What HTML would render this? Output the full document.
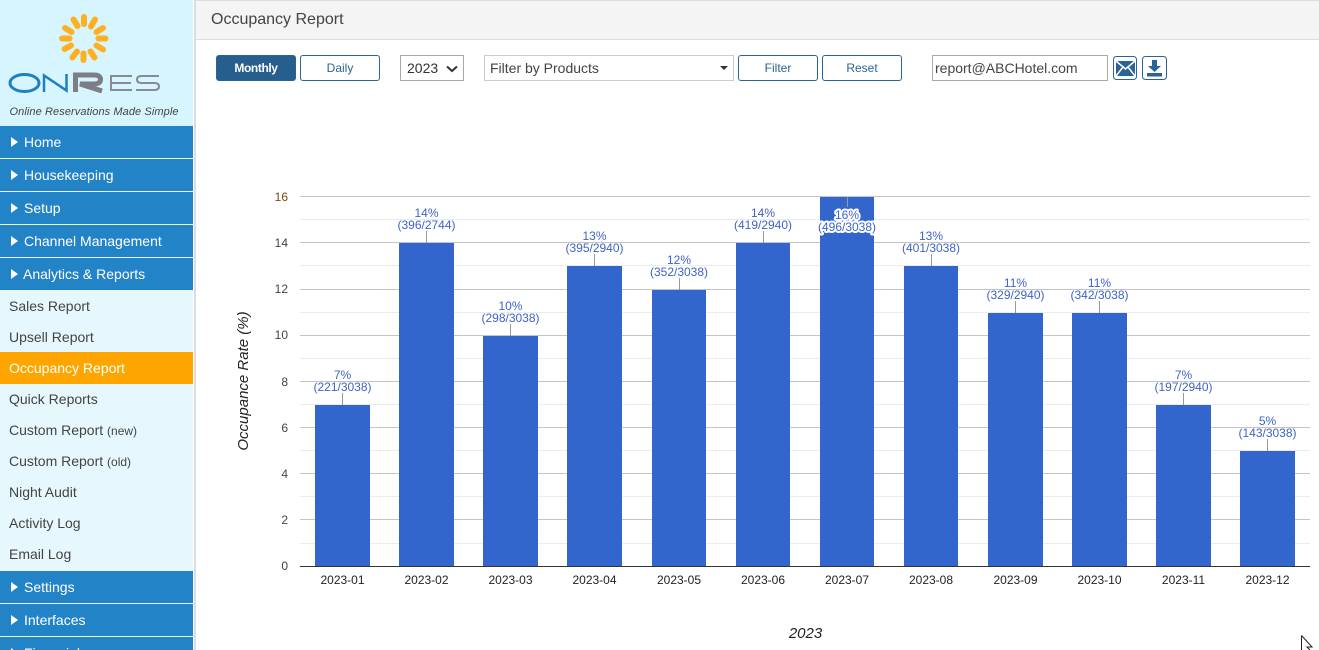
<!DOCTYPE html>
<html><head><meta charset="utf-8">
<style>
html,body{margin:0;padding:0;width:1319px;height:650px;overflow:hidden;background:#fff;font-family:"Liberation Sans",sans-serif;}
.abs{position:absolute;box-sizing:border-box;}
#side{left:0;top:0;width:193px;height:650px;background:#e6f7fd;overflow:hidden;}
#logo{left:0;top:0;width:193px;height:126px;background:#d7f5ff;}
.m{position:absolute;left:0;width:193px;height:32px;background:#2283c7;color:#fff;font-size:14px;line-height:32px;padding-left:24px;box-sizing:border-box;}
.m:before{content:"";position:absolute;left:11px;top:11px;border-left:7px solid #fff;border-top:5px solid transparent;border-bottom:5px solid transparent;}
.s{position:absolute;left:9px;font-size:14px;color:#444;line-height:20px;white-space:nowrap;}
.s small{font-size:12px;}
.btn{position:absolute;top:55px;height:26px;border:1px solid #2a6496;border-radius:3px;background:#fff;color:#2a6496;font-size:12px;text-align:center;line-height:24px;box-sizing:border-box;}
</style></head><body>
<div class="abs" id="side">
<div class="abs" id="logo">
<svg width="193" height="126" style="position:absolute;left:0;top:0">
<g stroke="#fdb022" stroke-width="6" stroke-linecap="round">
<line x1="84" y1="17" x2="84" y2="24"/>
<line x1="95" y1="19.500" x2="91" y2="26.500"/>
<line x1="103" y1="28" x2="96.500" y2="32"/>
<line x1="105.500" y1="38.500" x2="98.500" y2="38.500"/>
<line x1="103" y1="49.500" x2="96.500" y2="45.500"/>
<line x1="94.500" y1="57.500" x2="90.500" y2="51.500"/>
<line x1="83.500" y1="60" x2="83.500" y2="53.500"/>
<line x1="72.500" y1="57.500" x2="77" y2="51.500"/>
<line x1="64.500" y1="49" x2="71" y2="45.500"/>
<line x1="62" y1="38.500" x2="69.500" y2="38.500"/>
<line x1="65" y1="28" x2="71.500" y2="32"/>
<line x1="73.500" y1="19.500" x2="77.500" y2="26"/>
</g>
<ellipse cx="24.500" cy="83" rx="14.500" ry="8.500" fill="none" stroke="#1f7fc4" stroke-width="3"/>
<path d="M44 92V75.500L66.500 90.500V74" fill="none" stroke="#1f7fc4" stroke-width="2.500"/>
<path d="M75.500 92V75H94Q100.500 75 100.500 79.500Q100.500 84 94 84H80L102 91" fill="none" stroke="#7d7d85" stroke-width="5"/>
<path d="M132 76H111V90H132M111 83H131" fill="none" stroke="#8a8a92" stroke-width="2"/>
<path d="M159 76H142Q137 76 137 79.500Q137 83 142 83H154Q159 83 159 86.500Q159 90 154 90H136" fill="none" stroke="#8a8a92" stroke-width="2"/>
<text x="9.500" y="115" font-family="Liberation Sans" font-size="11" font-style="italic" fill="#444" textLength="169">Online Reservations Made Simple</text>
</svg>
</div>
<div class="m" style="top:126px">Home</div>
<div class="m" style="top:159px">Housekeeping</div>
<div class="m" style="top:192px">Setup</div>
<div class="m" style="top:225px">Channel Management</div>
<div class="m" style="top:258px;padding-left:23px">Analytics &amp; Reports</div>
<div class="s" style="top:296px">Sales Report</div>
<div class="s" style="top:327px">Upsell Report</div>
<div class="abs" style="left:0;top:352px;width:193px;height:32px;background:#ffa500"></div>
<div class="s" style="top:358px;color:#fff">Occupancy Report</div>
<div class="s" style="top:389px">Quick Reports</div>
<div class="s" style="top:420px">Custom Report <small>(new)</small></div>
<div class="s" style="top:451px">Custom Report <small>(old)</small></div>
<div class="s" style="top:482px">Night Audit</div>
<div class="s" style="top:513px">Activity Log</div>
<div class="s" style="top:544px">Email Log</div>
<div class="m" style="top:571px">Settings</div>
<div class="m" style="top:604px">Interfaces</div>
<div class="m" style="top:637px">Financials</div>
</div>
<div class="abs" style="left:193px;top:0;width:1px;height:650px;background:#fff"></div>
<div class="abs" style="left:194px;top:0;width:2px;height:650px;background:#ddd"></div>
<div class="abs" style="left:196px;top:0;width:1123px;height:40px;background:#f4f4f4;border-top:1px solid #ddd;border-bottom:1px solid #ddd;"></div>
<div class="abs" style="left:211px;top:9px;font-size:16px;line-height:20px;color:#444;top:10px">Occupancy Report</div>

<div class="btn" style="left:216px;width:80px;background:#265f8d;color:#fff;font-weight:bold;letter-spacing:-0.4px;">Monthly</div>
<div class="btn" style="left:300px;width:80px;">Daily</div>
<div class="abs" style="left:400px;top:55px;width:64px;height:26px;border:1px solid #aaa;font-size:14px;line-height:24px;padding-left:6px;color:#333;">2023
<svg width="12" height="8" style="position:absolute;left:45px;top:9px"><path d="M1 1.500L6 6L11 1.500" fill="none" stroke="#333" stroke-width="2"/></svg></div>
<div class="abs" style="left:484px;top:55px;width:250px;height:26px;border:1px solid #ccc;font-size:14px;line-height:24px;padding-left:5px;color:#444;">Filter by Products
<div class="abs" style="left:235px;top:10px;border-top:4px solid #333;border-left:4px solid transparent;border-right:4px solid transparent;"></div></div>
<div class="btn" style="left:738px;width:80px;">Filter</div>
<div class="btn" style="left:822px;width:80px;">Reset</div>
<div class="abs" style="left:932px;top:55px;width:176px;height:26px;border:1px solid #aaa;font-size:14px;line-height:24px;padding-left:2px;color:#444;">report@ABCHotel.com</div>
<svg class="abs" style="left:1113px;top:56px" width="25" height="24">
<rect x="0.500" y="0.500" width="23" height="23" rx="3" fill="#fff" stroke="#2a6496"/>
<rect x="3" y="5" width="19" height="15" fill="#2a6496"/>
<path d="M3 5L12.500 13L22 5M3 20L10 11M22 20L15 11" fill="none" stroke="#fff" stroke-width="1.500"/>
</svg>
<svg class="abs" style="left:1142px;top:56px" width="25" height="24">
<rect x="0.500" y="0.500" width="24" height="23" rx="3" fill="#fff" stroke="#2a6496"/>
<path d="M10 4H15V10H19L12.500 16L6 10H10Z" fill="#2a6496"/>
<rect x="5" y="17" width="15" height="3.500" fill="#2a6496"/>
</svg>

<svg class="abs" style="left:0;top:0" width="1319" height="650" font-family="Liberation Sans" font-size="12">
<g stroke="#ebebeb" stroke-width="1">
<path d="M300 219.500H1310M300 265.500H1310M300 312.500H1310M300 358.500H1310M300 404.500H1310M300 450.500H1310M300 496.500H1310M300 543.500H1310"/>
</g>
<g stroke="#c4c4c4" stroke-width="1">
<path d="M300 196.500H1310M300 242.500H1310M300 289.500H1310M300 335.500H1310M300 381.500H1310M300 427.500H1310M300 473.500H1310M300 519.500H1310"/>
</g>
<g fill="#3366cc">
<rect x="315" y="405" width="55" height="161"/>
<rect x="399" y="243" width="55" height="323"/>
<rect x="483" y="336" width="55" height="230"/>
<rect x="567" y="266" width="55" height="300"/>
<rect x="652" y="290" width="54" height="276"/>
<rect x="736" y="243" width="54" height="323"/>
<rect x="820" y="197" width="54" height="369"/>
<rect x="904" y="266" width="54" height="300"/>
<rect x="988" y="313" width="55" height="253"/>
<rect x="1072" y="313" width="55" height="253"/>
<rect x="1156" y="405" width="55" height="161"/>
<rect x="1240" y="451" width="55" height="115"/>
</g>
<path d="M300 566.500H1310" stroke="#333" stroke-width="1"/>
<g stroke="#999" stroke-width="1">
<path d="M342.500 393V405M426.500 231V243M510.500 324V336M594.500 254V266M679.500 278V290M763.500 231V243M847.500 197V207M931.500 254V266M1015.500 301V313M1099.500 301V313M1183.500 393V405M1267.500 439V451"/>
</g>
<g text-anchor="end" fill="#444" font-size="12">
<text x="288" y="201" fill="#7a4a10">16</text><text x="288" y="247">14</text><text x="288" y="293">12</text><text x="288" y="339">10</text>
<text x="288" y="386">8</text><text x="288" y="432">6</text><text x="288" y="478">4</text><text x="288" y="524">2</text><text x="288" y="570">0</text>
</g>
<g text-anchor="middle" fill="#222" font-size="12">
<text x="342.500" y="584">2023-01</text><text x="426.500" y="584">2023-02</text><text x="510.500" y="584">2023-03</text><text x="594.500" y="584">2023-04</text>
<text x="679" y="584">2023-05</text><text x="763" y="584">2023-06</text><text x="847" y="584">2023-07</text><text x="931" y="584">2023-08</text>
<text x="1015.500" y="584">2023-09</text><text x="1099.500" y="584">2023-10</text><text x="1183.500" y="584">2023-11</text><text x="1267.500" y="584">2023-12</text>
</g>
<g text-anchor="middle" fill="#3f62c9" font-size="12">
<text x="342.500" y="379">7%</text><text x="342.500" y="391">(221/3038)</text>
<text x="426.500" y="217">14%</text><text x="426.500" y="229">(396/2744)</text>
<text x="510.500" y="310">10%</text><text x="510.500" y="322">(298/3038)</text>
<text x="594.500" y="240">13%</text><text x="594.500" y="252">(395/2940)</text>
<text x="679" y="264">12%</text><text x="679" y="276">(352/3038)</text>
<text x="763" y="217">14%</text><text x="763" y="229">(419/2940)</text>
<g stroke="#fff" stroke-width="4" paint-order="stroke" stroke-linejoin="round"><text x="847" y="219">16%</text><text x="847" y="231">(496/3038)</text></g>
<text x="931" y="240">13%</text><text x="931" y="252">(401/3038)</text>
<text x="1015.500" y="287">11%</text><text x="1015.500" y="299">(329/2940)</text>
<text x="1099.500" y="287">11%</text><text x="1099.500" y="299">(342/3038)</text>
<text x="1183.500" y="379">7%</text><text x="1183.500" y="391">(197/2940)</text>
<text x="1267.500" y="425">5%</text><text x="1267.500" y="437">(143/3038)</text>
</g>
<text x="805.500" y="638" text-anchor="middle" font-size="15" font-style="italic" fill="#222">2023</text>
<text transform="translate(248 381) rotate(-90)" text-anchor="middle" font-size="15" font-style="italic" fill="#222">Occupance Rate (%)</text>
<path d="M1301.500 635.500V650M1301.500 635.500L1312 647H1307L1310 650" fill="#fff" stroke="#222" stroke-width="1"/>
</svg>
</body></html>
